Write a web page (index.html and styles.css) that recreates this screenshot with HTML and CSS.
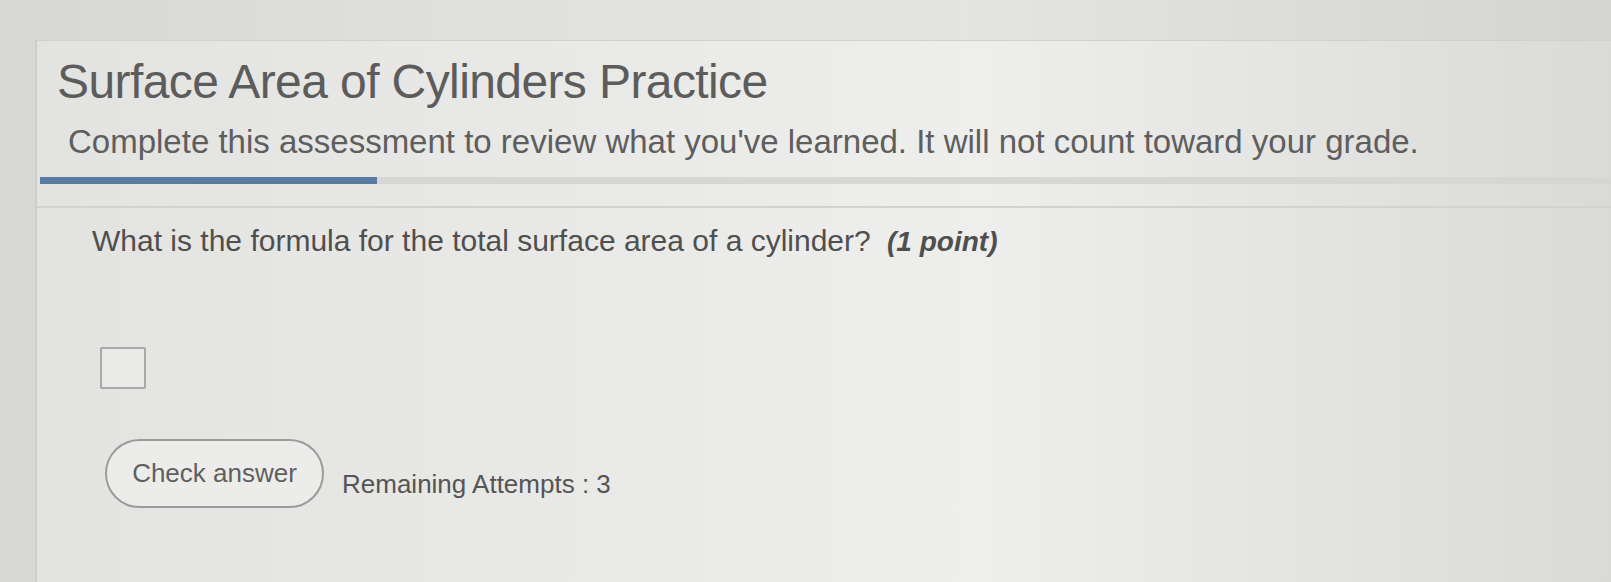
FILE: index.html
```html
<!DOCTYPE html>
<html>
<head>
<meta charset="utf-8">
<link rel="stylesheet" href="styles.css">
</head>
<body>
<div class="page">
  <header class="head">
    <h1 class="title">Surface Area of Cylinders Practice</h1>
    <p class="subtitle">Complete this assessment to review what you've learned. It will not count toward your grade.</p>
    <div class="progress"><div class="progress-fill" style="width:337px"></div></div>
  </header>
  <main class="question">
    <p class="prompt">What is the formula for the total surface area of a cylinder? <em class="points">(1 point)</em></p>
    <div class="answer-box"></div>
    <div class="actions">
      <button class="check">Check answer</button>
      <span class="attempts">Remaining Attempts : 3</span>
    </div>
  </main>
</div>
</body>
</html>
```
FILE: styles.css
```css
html, body {
  margin: 0;
  padding: 0;
}
body {
  width: 1611px;
  height: 582px;
  overflow: hidden;
  background: linear-gradient(90deg, #d7d7d5 0%, #e0e0de 30%, #e4e4e2 60%, #d4d4d2 100%);
  font-family: "Liberation Sans", Arial, sans-serif;
  color: #5f5f5f;
}
.page {
  margin: 40px 0 0 35px;
  height: 542px;
  background: linear-gradient(90deg, #e3e3e1 0%, #e9e9e7 35%, #eeeeec 60%, #dadad8 100%);
  border-left: 2px solid #cdcdcb;
  border-top: 1px solid #d0d0ce;
}
.head {
  padding: 13px 0 22px 0;
  border-bottom: 2px solid #d2d2d0;
}
.title {
  margin: 0 0 0 20px;
  font-size: 48px;
  font-weight: 400;
  line-height: 56px;
  letter-spacing: -0.6px;
  color: #5c5c5c;
}
.subtitle {
  margin: 13px 0 0 31px;
  font-size: 33px;
  line-height: 38px;
  color: #5e5e5e;
}
.progress {
  margin: 16px 0 0 3px;
  height: 7px;
  background: #d6d6d4;
}
.progress-fill {
  height: 7px;
  background: #5a7aa2;
}
.question {
  padding: 15px 0 0 55px;
}
.prompt {
  margin: 0;
  font-size: 30px;
  line-height: 36px;
  color: #4f4f4f;
}
.points {
  font-weight: 700;
  font-size: 28px;
  margin-left: 8px;
}
.answer-box {
  margin: 87px 0 0 8px;
  width: 42px;
  height: 38px;
  border: 2px solid #a9a9a9;
  border-radius: 2px;
  background: #e9e9e7;
}
.actions {
  margin-top: 50px;
  margin-left: 13px;
  display: flex;
  align-items: center;
  gap: 18px;
}
.check {
  width: 219px;
  height: 69px;
  border: 2px solid #9b9b9b;
  border-radius: 35px;
  background: #ececea;
  font-family: "Liberation Sans", Arial, sans-serif;
  font-size: 26px;
  color: #5f5f5f;
  padding: 0;
}
.attempts {
  font-size: 26px;
  color: #555;
  padding-top: 22px;
}
```
